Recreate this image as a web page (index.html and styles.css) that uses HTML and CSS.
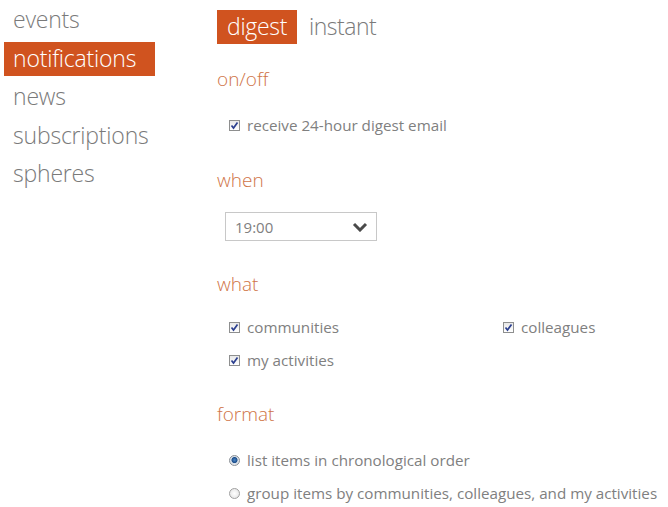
FILE: index.html
```html
<!DOCTYPE html>
<html>
<head>
<meta charset="utf-8">
<link rel="stylesheet" href="styles.css">
</head>
<body>
<div class="page">
  <nav class="nav">
    <a class="nav-item">events</a>
    <a class="nav-item active">notifications</a>
    <a class="nav-item">news</a>
    <a class="nav-item">subscriptions</a>
    <a class="nav-item">spheres</a>
  </nav>
  <main class="main">
    <div class="tabs">
      <span class="tab active">digest</span>
      <span class="tab">instant</span>
    </div>

    <h2 class="heading h-onoff">on/off</h2>
    <div class="options opt-onoff">
      <label class="opt"><span class="cb checked"><svg viewBox="0 0 11 11" width="11" height="11"><path d="M2.5 5.5 L4.5 8 L8.5 2.5" fill="none" stroke="#2b3f8f" stroke-width="1.7"/></svg></span>receive 24-hour digest email</label>
    </div>

    <h2 class="heading h-when">when</h2>
    <div class="select">
      <span class="select-value">19:00</span>
      <svg class="chev" viewBox="0 0 16 10" width="16" height="10"><path d="M2 2 L8 8 L14 2" fill="none" stroke="#4a4a4a" stroke-width="3"/></svg>
    </div>

    <h2 class="heading h-what">what</h2>
    <div class="options grid opt-what">
      <label class="opt"><span class="cb checked"><svg viewBox="0 0 11 11" width="11" height="11"><path d="M2.5 5.5 L4.5 8 L8.5 2.5" fill="none" stroke="#2b3f8f" stroke-width="1.7"/></svg></span>communities</label>
      <label class="opt"><span class="cb checked"><svg viewBox="0 0 11 11" width="11" height="11"><path d="M2.5 5.5 L4.5 8 L8.5 2.5" fill="none" stroke="#2b3f8f" stroke-width="1.7"/></svg></span>colleagues</label>
      <label class="opt"><span class="cb checked"><svg viewBox="0 0 11 11" width="11" height="11"><path d="M2.5 5.5 L4.5 8 L8.5 2.5" fill="none" stroke="#2b3f8f" stroke-width="1.7"/></svg></span>my activities</label>
    </div>

    <h2 class="heading h-format">format</h2>
    <div class="options stack opt-format">
      <label class="opt"><span class="radio checked"></span>list items in chronological order</label>
      <label class="opt"><span class="radio"></span>group items by communities, colleagues, and my activities</label>
    </div>
  </main>
</div>
</body>
</html>
```

FILE: styles.css
```css
html, body {
  margin: 0;
  padding: 0;
  background: #ffffff;
}
body {
  font-family: "Open Sans", "Noto Sans", "Liberation Sans", sans-serif;
  color: #777777;
}
.page {
  display: flex;
  width: 668px;
  height: 507px;
  overflow: hidden;
}
.nav {
  width: 213px;
  padding: 3px 0 0 4px;
  display: flex;
  flex-direction: column;
  align-items: flex-start;
  gap: 4.5px;
}
.nav-item {
  display: block;
  height: 34px;
  line-height: 33px;
  padding: 0 19px 0 9px;
  font-size: 23px;
  font-weight: 300;
  color: #7a7a7a;
  letter-spacing: -0.2px;
}
.nav-item.active {
  background: #d0531f;
  color: #ffffff;
}
.main {
  flex: 1;
  padding-top: 10px;
}
.tabs {
  display: flex;
  gap: 2px;
  height: 34px;
}
.tab {
  height: 34px;
  line-height: 33px;
  padding: 0 10px;
  font-size: 23px;
  font-weight: 300;
  color: #7a7a7a;
  letter-spacing: -0.5px;
}
.tab.active {
  background: #d0531f;
  color: #ffffff;
  letter-spacing: -0.3px;
}
.heading {
  margin: 0;
  height: 28px;
  line-height: 28px;
  font-size: 19px;
  font-weight: 300;
  color: #cf7447;
}
.h-onoff { margin-top: 21px; }
.h-when { margin-top: 30px; }
.h-what { margin-top: 29px; }
.h-format { margin-top: 29px; }
.options {
  padding-left: 12px;
}
.opt-onoff { margin-top: 21px; }
.opt-what { margin-top: 18px; }
.opt-format { margin-top: 21px; }
.grid {
  display: grid;
  grid-template-columns: 274px auto;
  row-gap: 11px;
}
.stack {
  display: flex;
  flex-direction: column;
  gap: 11px;
}
.opt {
  display: flex;
  align-items: center;
  height: 22px;
  font-size: 15.2px;
  color: #808080;
  white-space: nowrap;
}
.cb {
  width: 9px;
  height: 9px;
  border: 1px solid #8e8f8f;
  background: linear-gradient(#e8e8e8, #ffffff);
  margin-right: 7px;
  position: relative;
  flex: none;
}
.cb svg {
  position: absolute;
  left: -1px;
  top: -1px;
}
.radio {
  width: 9px;
  height: 9px;
  border: 1px solid #a0a0a0;
  border-radius: 50%;
  background: radial-gradient(circle, #ffffff 0%, #e0e0e0 100%);
  margin-right: 7px;
  flex: none;
  position: relative;
}
.radio.checked {
  background: radial-gradient(circle at 50% 45%, #4a86c7 0, #1d4f8c 2.6px, #d6dde6 3.4px, #f3f3f3 100%);
  border-color: #8a8f95;
}
.select {
  margin: 18px 0 0 8px;
  height: 27px;
  border: 1px solid #c8c8c8;
  display: flex;
  align-items: center;
  justify-content: space-between;
  padding: 0 8px 0 9px;
  box-sizing: content-box;
  width: 133px;
}
.select-value {
  font-size: 15px;
  color: #808080;
}
.chev {
  display: block;
}
```
